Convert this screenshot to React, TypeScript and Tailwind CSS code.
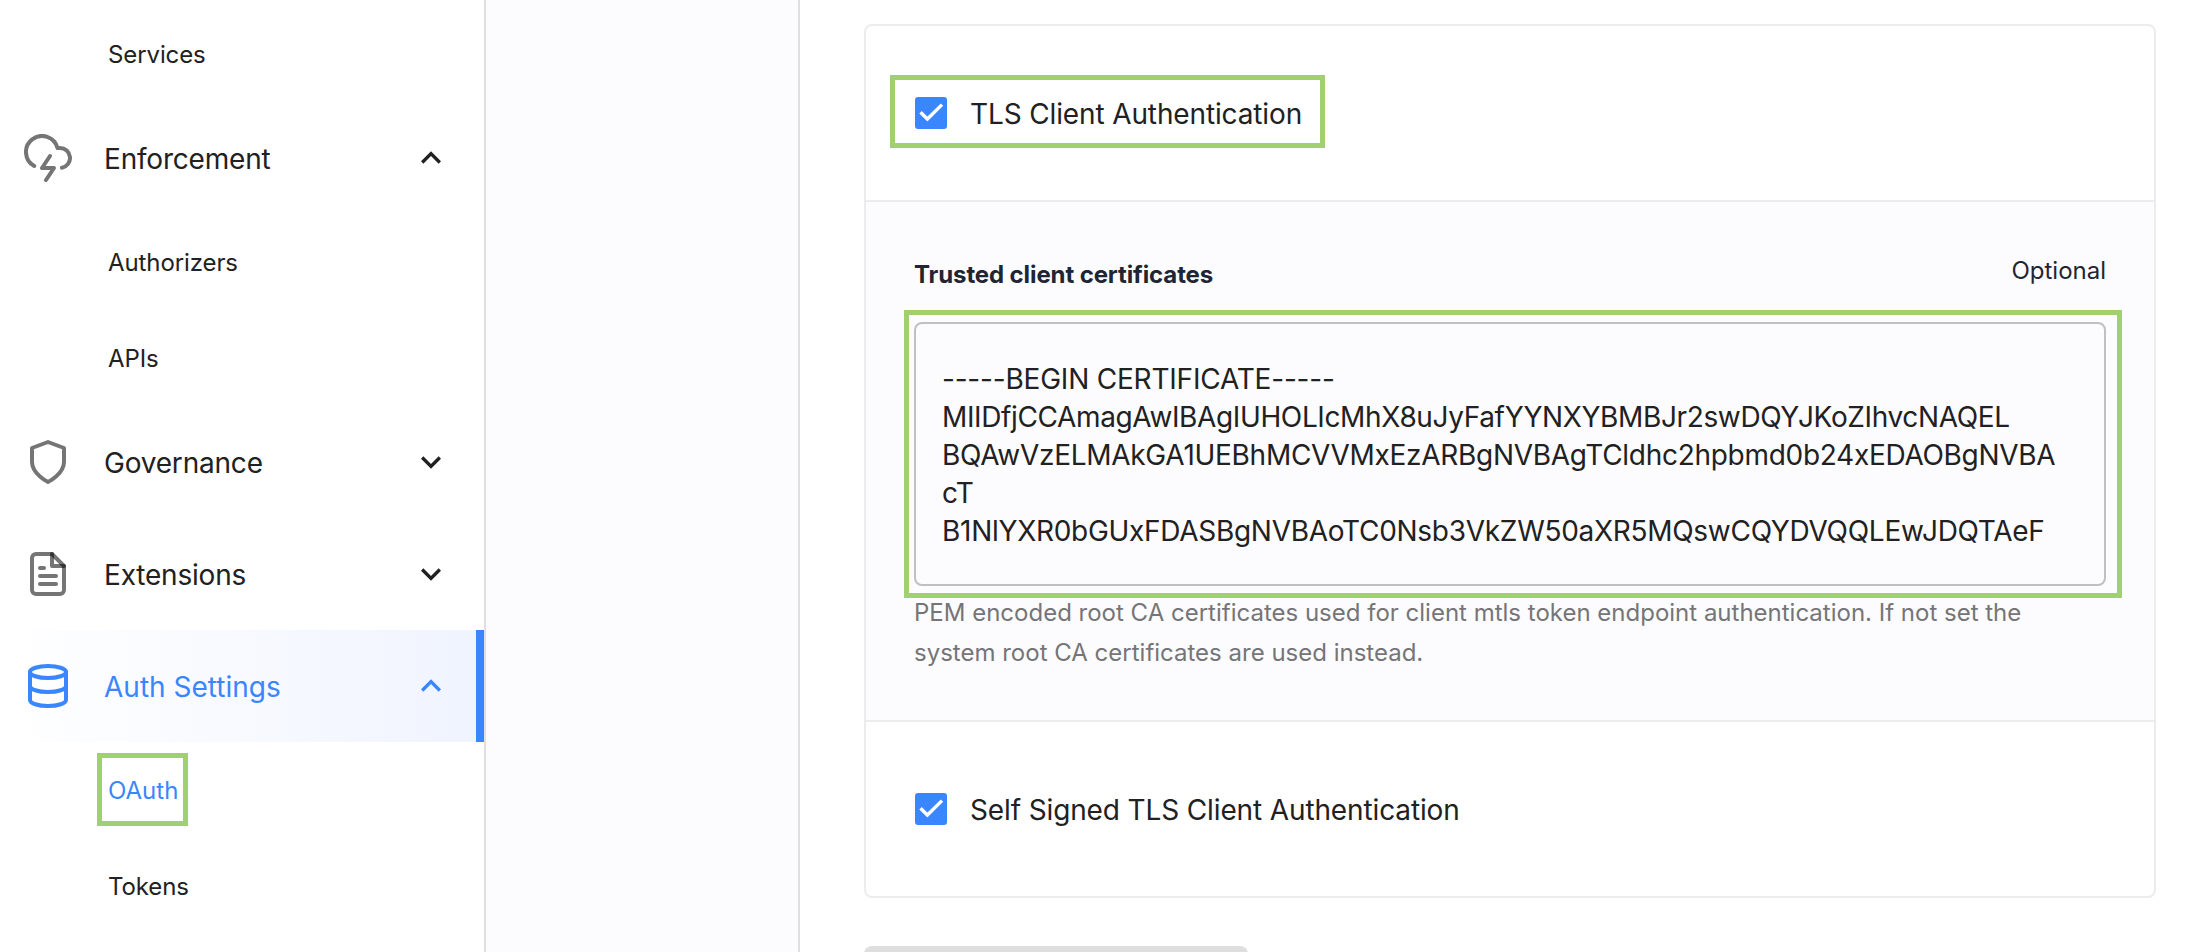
import React from "react";

const INK = "text-[#212121]";

function Chevron({ up }: { up?: boolean }) {
  return (
    <svg className="size-10" viewBox="0 0 24 24" fill="currentColor">
      <path d={up ? "M12 8l-6 6 1.41 1.41L12 10.83l4.59 4.58L18 14z" : "M16.59 8.59L12 13.17 7.41 8.59 6 10l6 6 6-6z"} />
    </svg>
  );
}

function Icon({ children, active }: { children: React.ReactNode; active?: boolean }) {
  return (
    <svg
      className={active ? "size-12" : "size-12 text-black"}
      viewBox="0 0 24 24"
      fill="none"
      stroke="currentColor"
      strokeWidth="2"
      strokeOpacity={active ? 1 : 0.54}
      strokeLinecap="round"
      strokeLinejoin="round"
    >
      {children}
    </svg>
  );
}

function Group({ icon, label, open, active }: { icon: React.ReactNode; label: string; open?: boolean; active?: boolean }) {
  return (
    <div
      className={
        active
          ? "flex h-28 items-center border-r-8 border-[#3a86ff] bg-gradient-to-r from-white to-[#f0f4ff] pl-6 pr-[25px] text-[#3a86ff]"
          : `flex h-28 items-center pl-6 pr-[33px] tracking-[-0.2px] ${INK}`
      }
    >
      {icon}
      <span className="ml-8 flex-1 pt-0.5 text-[28px]">{label}</span>
      <Chevron up={open} />
    </div>
  );
}

function Sub({ label, active }: { label: string; active?: boolean }) {
  return (
    <div
      className={`flex h-24 items-center pl-[108px] pt-0.5 text-2xl ${active ? "text-[#3a86ff]" : `tracking-[-0.1px] ${INK}`}`}
    >
      <span className="relative">
        {label}
        {active && <span className="absolute -left-[11px] -top-[22px] h-[73px] w-[91px] border-[5px] border-[#a1d06f]" />}
      </span>
    </div>
  );
}

function Check({ label, marked }: { label: string; marked?: boolean }) {
  return (
    <label className={`relative flex h-[174px] items-center pl-[49px] ${INK}`}>
      {marked && <span className="absolute left-6 top-[49px] h-[73px] w-[435px] border-[5px] border-[#a1d06f]" />}
      <svg className="size-8" viewBox="0 0 32 32">
        <rect width="32" height="32" rx="3" fill="#3a86ff" />
        <path d="M5.5 15.2l6.9 6.8L27 7.6" fill="none" stroke="#fff" strokeWidth="3.4" />
      </svg>
      <span className="ml-[23px] pt-0.5 text-[28px] tracking-[-0.13px]">{label}</span>
    </label>
  );
}

const CERTIFICATE = [
  { text: "-----BEGIN CERTIFICATE-----", tracking: "tracking-[-0.2px]" },
  { text: "MIIDfjCCAmagAwIBAgIUHOLIcMhX8uJyFafYYNXYBMBJr2swDQYJKoZIhvcNAQEL", tracking: "tracking-[-0.37px]" },
  { text: "BQAwVzELMAkGA1UEBhMCVVMxEzARBgNVBAgTCldhc2hpbmd0b24xEDAOBgNVBA", tracking: "tracking-[-0.29px]" },
  { text: "cT", tracking: "tracking-normal" },
  { text: "B1NlYXR0bGUxFDASBgNVBAoTC0Nsb3VkZW50aXR5MQswCQYDVQQLEwJDQTAeF", tracking: "tracking-[-0.29px]" },
];

export default function App() {
  return (
    <div className="flex h-[952px] w-[2196px] overflow-hidden bg-white font-['Inter',sans-serif]">
      <nav className="w-[486px] shrink-0 border-r-2 border-[#dfdfe0] pt-1.5">
        <Sub label="Services" />
        <Group
          label="Enforcement"
          open
          icon={
            <Icon>
              <path d="M19 16.9A5 5 0 0 0 18 7h-1.26a8 8 0 1 0-11.62 9" />
              <path d="M13 11l-4 6h6l-4 6" />
            </Icon>
          }
        />
        <Sub label="Authorizers" />
        <Sub label="APIs" />
        <Group
          label="Governance"
          icon={
            <Icon>
              <path d="M12 22s8-4 8-10V5l-8-3-8 3v7c0 6 8 10 8 10z" />
            </Icon>
          }
        />
        <Group
          label="Extensions"
          icon={
            <Icon>
              <path d="M14 2H6a2 2 0 0 0-2 2v16a2 2 0 0 0 2 2h12a2 2 0 0 0 2-2V8z" />
              <path d="M14 2v6h6" />
              <path d="M16 13H8" />
              <path d="M16 17H8" />
              <path d="M10 9H8" />
            </Icon>
          }
        />
        <Group
          label="Auth Settings"
          open
          active
          icon={
            <Icon active>
              <ellipse cx="12" cy="5" rx="9" ry="3" />
              <path d="M21 12c0 1.66-4 3-9 3s-9-1.34-9-3" />
              <path d="M3 5v14c0 1.66 4 3 9 3s9-1.34 9-3V5" />
            </Icon>
          }
        />
        <Sub label="OAuth" active />
        <Sub label="Tokens" />
      </nav>

      <aside className="w-[314px] shrink-0 border-r-2 border-[#dfdfe0] bg-[#fcfcff]" />

      <main className="flex-1 pl-16 pt-6">
        <section className="h-[874px] w-[1292px] rounded-lg border-2 border-[#ececec]">
          <Check label="TLS Client Authentication" marked />
          <div className="h-[522px] border-y-2 border-[#ececec] bg-[#fcfcff] px-12">
            <div className="flex h-[120px] justify-between pt-[50px] text-2xl text-[#212533]">
              <h3 className="pt-[7px] text-[24px] font-bold leading-8 tracking-[-0.11px]">Trusted client certificates</h3>
              <span className="pt-[3px] leading-8">Optional</span>
            </div>
            <div className="relative h-[264px] rounded-lg border-2 border-[#c0c0c2] px-[26px] pt-9">
              <span className="absolute -left-3 -top-3.5 h-[288px] w-[1218px] border-[5px] border-[#a1d06f]" />
              {CERTIFICATE.map(({ text, tracking }) => (
                <p key={text} className={`whitespace-nowrap text-[28px] leading-[38px] ${tracking} ${INK}`}>
                  {text}
                </p>
              ))}
            </div>
            <p className="mt-[7px] text-2xl leading-10 text-[#757577]">
              PEM encoded root CA certificates used for client mtls token endpoint authentication. If not set the
              <br />
              system root CA certificates are used instead.
            </p>
          </div>
          <Check label="Self Signed TLS Client Authentication" />
        </section>
        <div className="mt-12 h-16 w-96 rounded-lg bg-[#dfdfdf]" />
      </main>
    </div>
  );
}
